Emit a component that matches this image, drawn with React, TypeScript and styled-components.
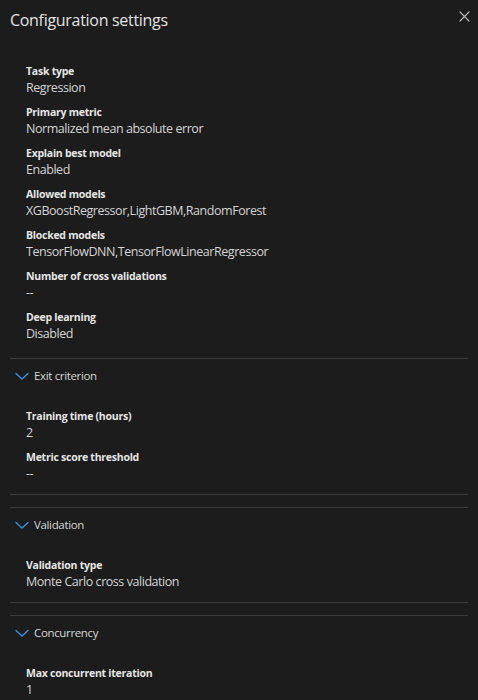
import * as React from 'react';
import styled, { createGlobalStyle } from 'styled-components';

type Field = { label: string; value: string };
type Group = { title: string; fields: Field[] };

const summary: Field[] = [
  { label: 'Task type', value: 'Regression' },
  { label: 'Primary metric', value: 'Normalized mean absolute error' },
  { label: 'Explain best model', value: 'Enabled' },
  { label: 'Allowed models', value: 'XGBoostRegressor,LightGBM,RandomForest' },
  { label: 'Blocked models', value: 'TensorFlowDNN,TensorFlowLinearRegressor' },
  { label: 'Number of cross validations', value: '--' },
  { label: 'Deep learning', value: 'Disabled' },
];

const groups: Group[] = [
  {
    title: 'Exit criterion',
    fields: [
      { label: 'Training time (hours)', value: '2' },
      { label: 'Metric score threshold', value: '--' },
    ],
  },
  {
    title: 'Validation',
    fields: [{ label: 'Validation type', value: 'Monte Carlo cross validation' }],
  },
  {
    title: 'Concurrency',
    fields: [{ label: 'Max concurrent iteration', value: '1' }],
  },
];

const GlobalStyle = createGlobalStyle`
  html, body {
    margin: 0;
    padding: 0;
    background: #1c1c1c;
  }
  body {
    font-family: "Open Sans", "Noto Sans", sans-serif;
    color: #d6d6d6;
  }
`;

function ChevronDown() {
  return (
    <svg width="14" height="14" viewBox="0 0 14 14" fill="none">
      <path d="M1 4.5l6 5.5 6-5.5" stroke="#3c8fdc" strokeWidth="1.4" strokeLinecap="round" strokeLinejoin="round" />
    </svg>
  );
}

function CloseIcon() {
  return (
    <svg width="11" height="11" viewBox="0 0 11 11" fill="none">
      <path d="M1 1l9 9M10 1l-9 9" stroke="#b4b4b4" strokeWidth="1.2" strokeLinecap="round" />
    </svg>
  );
}

function FieldList({ fields }: { fields: Field[] }) {
  return (
    <Fields>
      {fields.map((f) => (
        <FieldItem key={f.label}>
          <FieldLabel>{f.label}</FieldLabel>
          <FieldValue>{f.value}</FieldValue>
        </FieldItem>
      ))}
    </Fields>
  );
}

export default function App() {
  return (
    <Panel>
      <GlobalStyle />
      <Header>
        <Title>Configuration settings</Title>
        <CloseButton aria-label="Close">
          <CloseIcon />
        </CloseButton>
      </Header>

      <Summary>
        <FieldList fields={summary} />
      </Summary>

      {groups.map((g) => (
        <Section key={g.title}>
          <SectionHeader>
            <ChevronDown />
            <SectionTitle>{g.title}</SectionTitle>
          </SectionHeader>
          <SectionBody>
            <FieldList fields={g.fields} />
          </SectionBody>
        </Section>
      ))}
    </Panel>
  );
}

const Panel = styled.div`
  width: 478px;
  min-height: 700px;
  box-sizing: border-box;
  padding: 0 10px;
  background: #1c1c1c;
  display: flex;
  flex-direction: column;
  gap: 12px;
`;

const Header = styled.div`
  height: 39px;
  display: flex;
  align-items: center;
  justify-content: space-between;
  margin-bottom: -12px;
`;

const Title = styled.h1`
  margin: 0;
  font-size: 16px;
  font-weight: 400;
  color: #e2e2e2;
  letter-spacing: -0.3px;
`;

const CloseButton = styled.button`
  background: none;
  border: 0;
  padding: 0;
  margin: -7px -3px 0 0;
  width: 14px;
  height: 14px;
  display: flex;
  align-items: center;
  justify-content: center;
`;

const Summary = styled.div`
  padding: 24px 16px 16px;
  margin-bottom: -12px;
`;

const Fields = styled.div`
  display: flex;
  flex-direction: column;
  gap: 8px;
`;

const FieldItem = styled.div`
  display: flex;
  flex-direction: column;
`;

const FieldLabel = styled.div`
  font-size: 10.5px;
  line-height: 16px;
  font-weight: 700;
  color: #e6e6e6;
  letter-spacing: -0.25px;
`;

const FieldValue = styled.div`
  font-size: 12.5px;
  line-height: 17px;
  color: #d4d4d4;
  letter-spacing: -0.45px;
`;

const Section = styled.section`
  border-top: 1px solid #3a3a3a;
  border-bottom: 1px solid #3a3a3a;
`;

const SectionHeader = styled.div`
  height: 33px;
  display: flex;
  align-items: center;
  gap: 5px;
  padding-left: 5px;
`;

const SectionTitle = styled.span`
  font-size: 11.5px;
  color: #d6d6d6;
  letter-spacing: -0.35px;
`;

const SectionBody = styled.div`
  padding: 16px 16px 12px;
`;
